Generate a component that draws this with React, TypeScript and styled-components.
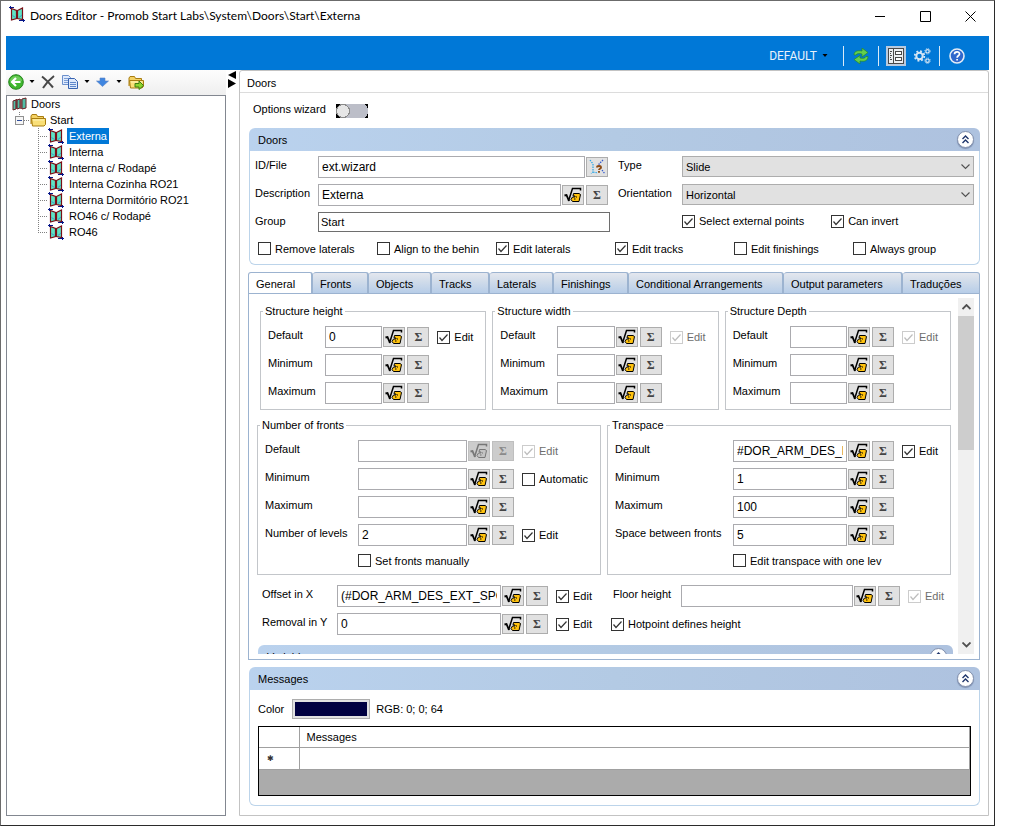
import React, { useId } from "react";
import styled, { createGlobalStyle, css } from "styled-components";

const GlobalStyle = createGlobalStyle`
  *, *::before, *::after { box-sizing: border-box; }
  body {
    margin: 0;
    background: #fff;
    color: #000;
    font: 11px/16px "Liberation Sans", Arial, sans-serif;
  }
  button, input, select { font: inherit; color: inherit; margin: 0; }
  svg { display: block; flex: none; }
`;

/* ---------- window frame ---------- */

const Window = styled.div`
  display: flex;
  flex-direction: column;
  min-height: 100vh;
  margin-right: 23px;
  padding: 0 5px 9px;
  border: 1px solid #2b2b2b;
  border-top-color: #6b6b6b;
  border-left-color: #6b6b6b;
`;

const TitleBar = styled.header`
  display: flex;
  align-items: flex-start;
  height: 35px;
  padding: 5px 9px 0 3px;
`;

const Title = styled.h1`
  flex: 1;
  margin: 0 0 0 4px;
  font: 12px/20px Lato, "Open Sans", sans-serif;
  white-space: nowrap;
`;

const WindowButtons = styled.div`
  display: flex;
  gap: 25px;
`;

const PlainButton = styled.button`
  display: flex;
  align-items: center;
  justify-content: center;
  padding: 0;
  border: 0;
  background: none;
`;

const WindowButton = styled(PlainButton)`
  width: 20px;
  height: 20px;
`;

const CommandBar = styled.div`
  display: flex;
  align-items: center;
  justify-content: flex-end;
  height: 34px;
  padding: 5px 15px 0 0;
  background: #0078d7;
  color: #fff;
`;

const ProfileButton = styled(PlainButton)`
  gap: 5px;
  margin-right: 15px;
  font: 12px/16px Roboto, "Open Sans", sans-serif;
  color: #e8f2fb;
`;

const BarDivider = styled.span`
  width: 1px;
  height: 20px;
  background: #d9eaf8;
`;

const BarGroup = styled.div`
  display: flex;
  gap: 6px;
  padding: 0 7px;
`;

const BarButton = styled(PlainButton)<{ $active?: boolean }>`
  width: 20px;
  height: 20px;
  background: ${(p) => (p.$active ? "#b9cade" : "none")};
`;

const Workspace = styled.div`
  display: flex;
  flex: 1;
`;

/* ---------- navigation ---------- */

const Sidebar = styled.nav`
  display: flex;
  flex-direction: column;
  width: 220px;
`;

const ToolStrip = styled.div`
  display: flex;
  align-items: center;
  height: 25px;
  padding-bottom: 2px;
  background: linear-gradient(#fdfdfd, #efefef);
`;

const ToolButton = styled(PlainButton)<{ $width?: number }>`
  width: ${(p) => p.$width ?? 18}px;
  height: 20px;
`;

const Tree = styled.ul`
  flex: 1;
  margin: 0;
  padding: 0;
  border: 1px solid #828790;
  list-style: none;
`;

const Branch = styled.ul`
  margin: 0;
  padding: 0;
  list-style: none;
`;

const TreeRow = styled.div<{ $indent: number }>`
  display: flex;
  align-items: center;
  height: 16px;
  padding-left: ${(p) => p.$indent}px;
`;

const TreeText = styled.span<{ $selected?: boolean }>`
  margin-left: 2px;
  padding: 0 2px;
  white-space: nowrap;
  ${(p) => p.$selected && css`background: #0078d7; color: #fff;`}
`;

const Connector = styled.span<{ $last?: boolean }>`
  width: 10px;
  height: 16px;
  background-repeat: no-repeat;
  background-image:
    repeating-linear-gradient(#808080 0 1px, transparent 1px 2px),
    repeating-linear-gradient(90deg, #808080 0 1px, transparent 1px 2px);
  background-size: 1px ${(p) => (p.$last ? "9px" : "16px")}, 10px 1px;
  background-position: 0 0, 0 8px;
`;

const Splitter = styled.div`
  width: 13px;
  padding: 1px 0 0 2px;
`;

/* ---------- editor ---------- */

const Editor = styled.main`
  display: flex;
  flex: 1;
  flex-direction: column;
  min-width: 0;
  border: 1px solid #c3c3c3;
  border-radius: 3px 3px 0 0;
`;

const EditorHeading = styled.h2`
  height: 22px;
  margin: 0;
  padding: 4px 7px 0;
  border-bottom: 1px solid #dcdcdc;
  font-size: 11px;
  font-weight: 400;
`;

const EditorBody = styled.div`
  display: flex;
  flex: 1;
  flex-direction: column;
  padding: 0 8px 9px;
`;

const WizardRow = styled.div`
  display: flex;
  align-items: center;
  gap: 10px;
  height: 35px;
  padding-left: 5px;
`;

const CaptionLabel = styled.label`
  padding-bottom: 4px;
`;

const Toggle = styled.input`
  appearance: none;
  width: 32px;
  height: 14px;
  background: radial-gradient(circle at 7px 7px, #e6e6e6 6px, #8a8a8a 6px 7px, transparent 7px),
    radial-gradient(circle at 24px 7px, #bcbec8 8px, transparent 8px),
    linear-gradient(90deg, #000 4px, #bcbec8 4px 28px, #000 28px);
`;

const Group = styled.section`
  margin-left: 1px;
`;

const GroupHeader = styled.div`
  display: flex;
  align-items: center;
  justify-content: space-between;
  height: 23px;
  padding: 0 6px 0 9px;
  border-radius: 6px 6px 0 0;
  background: linear-gradient(90deg, #bad2ee, #b3cae4 50%, #aec2df);
`;

const GroupTitle = styled.h3`
  margin: 0;
  font-size: 11px;
  font-weight: 400;
`;

const GroupBody = styled.div<{ $pad: string }>`
  padding: ${(p) => p.$pad};
  border: 1px solid #bcd4ea;
  border-top: 0;
  border-radius: 0 0 6px 6px;
`;

const RoundButton = styled(PlainButton)`
  width: 17px;
  height: 17px;
  border: 1px solid #8391ae;
  border-radius: 50%;
  background: #fff;
  box-shadow: 0 1px 1px #7e8fb0;
`;

const DoorGrid = styled.div`
  display: grid;
  grid-template-columns: 63px 1fr 72px 1fr;
  grid-auto-rows: 22px;
  row-gap: 6px;
`;

const FieldLabel = styled.label<{ $width?: number; $inset?: number }>`
  flex: none;
  align-self: flex-start;
  width: ${(p) => (p.$width ? `${p.$width}px` : "auto")};
  padding-left: ${(p) => p.$inset ?? 0}px;
  line-height: 19px;
  white-space: nowrap;
`;

const FieldRow = styled.div<{ $padEnd?: boolean }>`
  display: flex;
  align-items: center;
  height: 22px;
  padding-right: ${(p) => (p.$padEnd ? 2 : 0)}px;
`;

const TextBox = styled.input`
  flex: 1;
  width: 0;
  min-width: 0;
  height: 22px;
  padding: 0 3px;
  border: 1px solid #ababaf;
  background: #fff;
  font-size: 12px;
`;

const PlainTextBox = styled.input`
  width: 100%;
  height: 20px;
  padding: 0 2px;
  border: 1px solid #6e6e6e;
  background: #fff;
`;

const SmallButton = styled.button`
  display: flex;
  flex: none;
  align-items: center;
  justify-content: center;
  width: 22px;
  height: 20px;
  margin-left: 1px;
  padding: 0;
  border: 1px solid #adadad;
  background: #e1e1e1;
  &:disabled { background: #ccc; border-color: #bfbfbf; }
  & + & { margin-left: 2px; }
`;

const Sigma = styled.span`
  font: bold 12px/16px "Liberation Serif", serif;
  color: #444;
  button:disabled & { color: #8a8a8a; }
`;

const SelectBox = styled.div`
  display: grid;
  height: 21px;
  > * { grid-area: 1 / 1; }
  > svg { place-self: center end; margin-right: 4px; pointer-events: none; }
`;

const NativeSelect = styled.select`
  appearance: none;
  width: 100%;
  padding: 0 3px;
  border: 1px solid #adadad;
  border-radius: 0;
  background: #e1e1e1;
`;

const CheckLabel = styled.label<{ $disabled?: boolean }>`
  display: flex;
  align-items: center;
  gap: 4px;
  white-space: nowrap;
  color: ${(p) => (p.$disabled ? "#6d6d6d" : "#000")};
`;

const CheckMark = styled.span`
  display: grid;
  flex: none;
  > * { grid-area: 1 / 1; }
  > input:not(:checked) + svg { visibility: hidden; }
`;

const CheckInput = styled.input`
  appearance: none;
  width: 13px;
  height: 13px;
  border: 1px solid #333;
  background: #fff;
  &:disabled { border-color: #ccc; }
`;

const PointChecks = styled.div`
  display: flex;
  gap: 27px;
  height: 18px;
`;

const OptionRow = styled.div`
  display: grid;
  grid-template-columns: repeat(6, 1fr);
  align-items: center;
  height: 17px;
  margin-top: 6px;
  padding: 0 2px 0 3px;
`;

/* ---------- tabs ---------- */

const TabBar = styled.div`
  display: grid;
  grid-template-columns: 65fr 56fr 63fr 58fr 64fr 75fr 155fr 119fr 77fr;
  height: 22px;
  margin: 7px 0 -1px;
`;

const Tab = styled.button<{ $active?: boolean }>`
  min-width: 0;
  padding: 2px 0 0 7px;
  border: 1px solid #9cb3d0;
  border-left-width: ${(p) => (p.$active ? 1 : 0)}px;
  border-bottom-color: ${(p) => (p.$active ? "#c9dcee" : "#9cb3d0")};
  border-right-width: 2px;
  border-radius: 3px 3px 0 0;
  background: ${(p) => (p.$active ? "#fff" : "linear-gradient(#e4e7ee, #cfdbea 45%, #b7cde8)")};
  text-align: left;
  white-space: nowrap;
  &:last-child { border-right-width: 1px; }
`;

const TabPanel = styled.div`
  display: flex;
  flex: 1 1 367px;
  min-height: 0;
  margin-bottom: 7px;
  padding: 4px 5px 5px 0;
  border: 1px solid #9cb3d0;
`;

const ScrollView = styled.div`
  flex: 1;
  height: 0;
  min-height: 100%;
  padding: 7px 7px 0 8px;
  overflow: hidden;
`;

const ScrollBar = styled.div`
  display: flex;
  flex-direction: column;
  align-items: center;
  width: 16px;
  background: #f0f0f0;
`;

const ScrollArrow = styled(PlainButton)`
  width: 16px;
  height: 18px;
`;

const ScrollTrack = styled.div`
  flex: 1;
  width: 100%;
`;

const ScrollThumb = styled.div`
  height: 42%;
  background: #cdcdcd;
`;

const Columns = styled.div<{ $count: number; $inset?: number; $top?: number }>`
  display: grid;
  grid-template-columns: repeat(${(p) => p.$count}, minmax(0, 1fr));
  column-gap: 6px;
  margin-top: ${(p) => p.$top ?? 0}px;
  padding-left: ${(p) => p.$inset ?? 0}px;
`;

const Fieldset = styled.fieldset`
  min-width: 0;
  margin: 0;
  padding: 8px 0 5px 7px;
  border: 1px solid #c3c6ca;
`;

const Legend = styled.legend`
  margin-left: -5px;
  padding: 0 2px;
  line-height: 13px;
`;

const Stack = styled.div<{ $inset?: number }>`
  display: flex;
  flex-direction: column;
  gap: 6px;
  padding-left: ${(p) => p.$inset ?? 0}px;
`;

const Tail = styled.div<{ $width: number }>`
  flex: none;
  width: ${(p) => p.$width}px;
  padding-left: 8px;
`;

const IndentedCheck = styled.div<{ $inset: number }>`
  display: flex;
  height: 17px;
  padding-left: ${(p) => p.$inset}px;
`;

const VariablesGroup = styled(Group)`
  margin: 10px -2px 0 1px;
`;

/* ---------- messages ---------- */

const ColorRow = styled.div`
  display: flex;
  align-items: center;
  height: 20px;
  margin-bottom: 7px;
`;

const ColorButton = styled.button`
  width: 78px;
  height: 20px;
  margin: 0 6px 0 8px;
  padding: 2px;
  border: 1px solid #adadad;
  background: #e1e1e1;
`;

const Swatch = styled.span`
  display: block;
  height: 14px;
  background: #000040;
`;

const DataArea = styled.div`
  height: 70px;
  border: 1px solid #000;
  background: #ababab;
`;

const DataTable = styled.table`
  width: 100%;
  border-collapse: collapse;
  background: #fff;
  th, td {
    height: 22px;
    padding: 0 7px;
    border: 1px solid #a0a0a0;
    border-top: 0;
    font-weight: 400;
    text-align: left;
  }
  th { height: 20px; }
  th:first-child { width: 40px; padding: 2px 8px 0; border-left: 0; font-size: 8px; color: #333; }
`;

/* ---------- drawings ---------- */

const DoorIcon = () => (
  <svg width="17" height="16" viewBox="0 0 17 16">
    <path d="M2.500 2.500l5 2v8l-5 1.500z" fill="#5fe3c4" stroke="#7a0f16" strokeWidth="1.200" />
    <path d="M8.500 4.500l5-2.500v11.500l-5-1z" fill="#5fe3c4" stroke="#7a0f16" strokeWidth="1.200" />
    <path d="M8 4.500v8.500" stroke="#7a0f16" strokeWidth="2" />
    <path d="M3.500 9.500l3 2M10 11.500l3-2.500" stroke="#3a9ccb" />
    <path d="M0 1h1V0h1v1h3v1H2v1H1V2H0zM10 14h4v-1h1v1h1v1h-1v1h-1v-1h-4z" fill="#061688" />
  </svg>
);

const DoorsIcon = () => (
  <svg width="15" height="14" viewBox="0 0 15 14">
    <path d="M1 4l3-1v9l-3 1zM5 3l3-1v9l-3 1zM10 2l4-1v10l-4 1z" fill="#52bea6" stroke="#6d2025" />
    <path d="M4.500 2v10M9 2v10" stroke="#743035" strokeWidth="1.500" />
  </svg>
);

const FolderIcon = ({ arrow }: { arrow?: boolean }) => (
  <svg width="16" height="16" viewBox="0 0 16 16">
    <path d="M1 12V4l1-1.500h4.500l1 2h6v2" fill="#f4d264" stroke="#a87c10" />
    <path d="M2.500 14L1.500 6.500h14v6L14 14z" fill="#f9df78" stroke="#a87c10" />
    <path d="M3 8h11" stroke="#fff4b6" />
    {arrow && <path d="M7 9.500h4V7l4.500 4.500-4.500 4v-2.500H7z" fill="#8ed52d" stroke="#3d7d12" />}
  </svg>
);

const ExpanderIcon = () => (
  <svg width="15" height="16" viewBox="0 0 15 16" shapeRendering="crispEdges">
    <path d="M4.500 0v4M9 8.500h6" stroke="#808080" strokeDasharray="1 1" />
    <rect x=".5" y="4.500" width="8" height="8" fill="#f6f6f6" stroke="#919191" />
    <path d="M2 8.500h5" stroke="#2d4c9b" />
  </svg>
);

const Caret = () => (
  <svg width="6" height="4" viewBox="0 0 6 4"><path d="M.5 0h5L3 3z" fill="#000" /></svg>
);

const BackIcon = () => (
  <svg width="16" height="16" viewBox="0 0 16 16">
    <circle cx="8" cy="8" r="7.300" fill="#3eb62d" stroke="#26851e" />
    <path d="M2 7a6 5 0 0 1 12 0z" fill="#8bda74" opacity=".6" />
    <path d="M12.500 8H5M8 4L4 8l4 4" fill="none" stroke="#fff" strokeWidth="2.200" />
  </svg>
);

const DeleteIcon = () => (
  <svg width="14" height="14" viewBox="0 0 14 14">
    <path d="M1 1.500C5 4.500 9 9 12 12.500M13 1C9 4 5 8.500 2 13" fill="none" stroke="#474747" strokeWidth="2" />
  </svg>
);

const CopyIcon = () => (
  <svg width="16" height="14" viewBox="0 0 16 14">
    <path d="M.5.5h6l2 2v7h-8z" fill="#dfeafc" stroke="#6c90cc" />
    <path d="M2 3.500h4M2 5.500h4M2 7.500h4" stroke="#7d9fd6" />
    <path d="M6.500 3.500h6l3 3v7h-9z" fill="#dce8fb" stroke="#3763b0" />
    <path d="M8 7.500h6M8 9.500h6M8 11.500h6" stroke="#5f88cb" />
  </svg>
);

const DownIcon = () => (
  <svg width="13" height="10" viewBox="0 0 13 10">
    <path d="M4 1h5v3h3.500L6.500 9.500.5 4H4z" fill="#3f86e0" stroke="#5b83c4" strokeWidth=".6" />
  </svg>
);

const SplitterIcon = () => (
  <svg width="9" height="17" viewBox="0 0 9 17">
    <path d="M8 0v8L0 4zM0 8v9l8-4.500z" fill="#000" />
  </svg>
);

const RefreshIcon = () => (
  <svg width="16" height="16" viewBox="0 0 16 16">
    <path d="M1 7c0-3.500 3-5 8-4V0l6 4.500L9 9V6C6 5.300 4 5.500 3 7z" fill="#63ce4d" stroke="#258a26" strokeWidth=".7" />
    <path d="M15 8.500c0 4-3 5.500-8 4.500v3l-6-4.500L7 7.500V10c3 .7 5 .3 6-1.500z" fill="#63ce4d" stroke="#258a26" strokeWidth=".7" />
  </svg>
);

const FormIcon = () => (
  <svg width="16" height="16" viewBox="0 0 16 16" shapeRendering="crispEdges">
    <rect x=".5" y=".5" width="15" height="15" fill="#eceff2" stroke="#4a4a4a" />
    <path d="M5.500 1v14M2 3.500h2M2 5.500h1M2 7.500h2M2 9.500h1M2 11.500h2" stroke="#4a4a4a" />
    <path d="M7.500 3.500h6v3h-6zM7.500 9.500h6v3h-6z" fill="#fff" stroke="#4a4a4a" />
  </svg>
);

const GearsIcon = () => (
  <svg width="17" height="16" viewBox="0 0 17 16" fill="none" stroke="#d7e6f4">
    <circle cx="5.500" cy="8" r="3.200" strokeWidth="2" />
    <circle cx="5.500" cy="8" r="4.800" strokeWidth="1.800" strokeDasharray="1.900 1.870" />
    <circle cx="13.500" cy="3.300" r="1.700" strokeWidth="1.200" />
    <circle cx="13.500" cy="3.300" r="2.700" strokeWidth="1" strokeDasharray="1 1.120" />
    <circle cx="13.500" cy="12.700" r="1.700" strokeWidth="1.200" />
    <circle cx="13.500" cy="12.700" r="2.700" strokeWidth="1" strokeDasharray="1 1.120" />
  </svg>
);

const HelpIcon = () => (
  <svg width="16" height="16" viewBox="0 0 16 16">
    <circle cx="8" cy="8" r="7" fill="#2f67cc" stroke="#e3ebf6" strokeWidth="1.600" />
    <path d="M5.500 6.300C5.500 3 10.600 3.200 10.500 6c0 1.800-2.400 1.800-2.400 3.700M8.100 11v1.500" fill="none" stroke="#fff" strokeWidth="1.700" />
  </svg>
);

const RootIcon = ({ disabled }: { disabled?: boolean }) => {
  const ink = disabled ? "#777" : "#000";
  return (
    <svg width="18" height="16" viewBox="0 0 18 16">
      <path
        d="M9.500 6.500h5.500l1.500 1-1.500 7H8.500l-1.500-2 1.500-2.500h2.500v-1H9z"
        fill={disabled ? "#c4c4c4" : "#ffc20e"}
        stroke={ink}
      />
      <path d="M10 12h1.500M12.500 9.500v1" fill="none" stroke={ink} />
      <path d="M4.500 14L8.500 1.500h8v2" fill="none" stroke={ink} strokeWidth="1.500" />
      <path d="M.5 8.500l2-.5 2.500 6" fill="none" stroke={ink} strokeWidth="1.900" />
    </svg>
  );
};

const PickIcon = () => (
  <svg width="18" height="16" viewBox="0 0 18 16">
    <path d="M2 1l3 4v8l-2 1.500M5 13l5 1" fill="none" stroke="#24a5e8" strokeDasharray="1.500 1" strokeWidth="1.200" />
    <path d="M15 1l-4 4 1 2M14 11l3 4" fill="none" stroke="#3158cf" strokeDasharray="1.500 1" strokeWidth="1.200" />
    <path d="M9 8.500c0-2 4-2 4 0 0 1.500-2 1-2 2.500M11 12v1.800" fill="none" stroke="#8b4a13" strokeWidth="1.900" />
  </svg>
);

const Chevron = ({ flip, bold }: { flip?: boolean; bold?: boolean }) => (
  <svg width="9" height="6" viewBox="0 0 9 6">
    <path d={flip ? "M.5 5l4-4 4 4" : "M.5.5l4 4 4-4"} fill="none" stroke="#505050" strokeWidth={bold ? 1.8 : 1.1} />
  </svg>
);

const DoubleUp = () => (
  <svg width="9" height="9" viewBox="0 0 9 9">
    <path d="M1.500 4l3-3 3 3M1.500 8l3-3 3 3" fill="none" stroke="#1f356b" strokeWidth="1.400" />
  </svg>
);

/* ---------- building blocks ---------- */

type CheckProps = { label: string; checked?: boolean; disabled?: boolean };

const Check = ({ label, checked, disabled }: CheckProps) => (
  <CheckLabel $disabled={disabled}>
    <CheckMark>
      <CheckInput type="checkbox" defaultChecked={checked} disabled={disabled} />
      <svg width="13" height="13" viewBox="0 0 13 13" pointerEvents="none">
        <path d="M2.500 6.500l2.500 3 5.500-6" fill="none" stroke={disabled ? "#bdbdbd" : "#333"} strokeWidth="1.200" />
      </svg>
    </CheckMark>
    {label}
  </CheckLabel>
);

const FormulaButtons = ({ disabled }: { disabled?: boolean }) => (
  <>
    <SmallButton type="button" aria-label="Formula" disabled={disabled}><RootIcon disabled={disabled} /></SmallButton>
    <SmallButton type="button" aria-label="Sum" disabled={disabled}><Sigma>Σ</Sigma></SmallButton>
  </>
);

type ValueRowProps = {
  label: string;
  labelWidth: number;
  labelInset?: number;
  tail: number;
  value?: string;
  locked?: boolean;
  check?: CheckProps;
};

const ValueRow = ({ label, labelWidth, labelInset, tail, value, locked, check }: ValueRowProps) => {
  const id = useId();
  return (
    <FieldRow>
      <FieldLabel htmlFor={id} $width={labelWidth} $inset={labelInset}>{label}</FieldLabel>
      <TextBox id={id} defaultValue={value ?? ""} />
      <FormulaButtons disabled={locked} />
      <Tail $width={tail}>{check && <Check {...check} />}</Tail>
    </FieldRow>
  );
};

const StructureBox = ({ title, value, editable }: { title: string; value?: string; editable?: boolean }) => (
  <Fieldset>
    <Legend>{title}</Legend>
    <Stack>
      <ValueRow label="Default" labelWidth={57} tail={56} value={value} check={{ label: "Edit", checked: true, disabled: !editable }} />
      <ValueRow label="Minimum" labelWidth={57} tail={56} />
      <ValueRow label="Maximum" labelWidth={57} tail={56} />
    </Stack>
  </Fieldset>
);

const Header = ({ title }: { title: string }) => (
  <GroupHeader>
    <GroupTitle>{title}</GroupTitle>
    <RoundButton type="button" aria-label="Collapse"><DoubleUp /></RoundButton>
  </GroupHeader>
);

const Dropdown = ({ id, value }: { id: string; value: string }) => (
  <SelectBox>
    <NativeSelect id={id} defaultValue={value}><option>{value}</option></NativeSelect>
    <Chevron />
  </SelectBox>
);

const doors = [
  "Externa", "Interna", "Interna c/ Rodapé", "Interna Cozinha RO21",
  "Interna Dormitório RO21", "RO46 c/ Rodapé", "RO46",
];

const tabs = [
  "General", "Fronts", "Objects", "Tracks", "Laterals", "Finishings",
  "Conditional Arrangements", "Output parameters", "Traduções",
];

export default function App() {
  return (
    <>
      <GlobalStyle />
      <Window>
        <TitleBar>
          <DoorIcon />
          <Title>Doors Editor - Promob Start Labs\System\Doors\Start\Externa</Title>
          <WindowButtons>
            <WindowButton aria-label="Minimize"><svg width="11" height="11"><path d="M0 5.500h10" stroke="#000" /></svg></WindowButton>
            <WindowButton aria-label="Maximize"><svg width="11" height="11"><path d="M.5.500h10v10h-10z" fill="none" stroke="#000" /></svg></WindowButton>
            <WindowButton aria-label="Close"><svg width="11" height="11"><path d="M.5.500l10 10M10.500.500l-10 10" stroke="#000" /></svg></WindowButton>
          </WindowButtons>
        </TitleBar>

        <CommandBar>
          <ProfileButton>DEFAULT <Caret /></ProfileButton>
          <BarDivider />
          <BarGroup><BarButton aria-label="Refresh"><RefreshIcon /></BarButton></BarGroup>
          <BarDivider />
          <BarGroup>
            <BarButton aria-label="Form view" $active><FormIcon /></BarButton>
            <BarButton aria-label="Settings"><GearsIcon /></BarButton>
          </BarGroup>
          <BarDivider />
          <BarGroup><BarButton aria-label="Help"><HelpIcon /></BarButton></BarGroup>
        </CommandBar>

        <Workspace>
          <Sidebar>
            <ToolStrip>
              <ToolButton aria-label="Back" $width={19}><BackIcon /></ToolButton>
              <ToolButton aria-label="Back history" $width={14}><Caret /></ToolButton>
              <ToolButton aria-label="Delete"><DeleteIcon /></ToolButton>
              <ToolButton aria-label="Copy" $width={26}><CopyIcon /></ToolButton>
              <ToolButton aria-label="Copy options" $width={8}><Caret /></ToolButton>
              <ToolButton aria-label="Move down" $width={22}><DownIcon /></ToolButton>
              <ToolButton aria-label="Move options" $width={12}><Caret /></ToolButton>
              <ToolButton aria-label="Export" $width={22}><FolderIcon arrow /></ToolButton>
            </ToolStrip>
            <Tree>
              <li>
                <TreeRow $indent={5}><DoorsIcon /><TreeText>Doors</TreeText></TreeRow>
                <Branch>
                  <li>
                    <TreeRow $indent={8}><ExpanderIcon /><FolderIcon /><TreeText>Start</TreeText></TreeRow>
                    <Branch>
                      {doors.map((name, i) => (
                        <li key={name}>
                          <TreeRow $indent={31}>
                            <Connector $last={i === doors.length - 1} />
                            <DoorIcon />
                            <TreeText $selected={i === 0}>{name}</TreeText>
                          </TreeRow>
                        </li>
                      ))}
                    </Branch>
                  </li>
                </Branch>
              </li>
            </Tree>
          </Sidebar>

          <Splitter><SplitterIcon /></Splitter>

          <Editor>
            <EditorHeading>Doors</EditorHeading>
            <EditorBody>
              <WizardRow>
                <CaptionLabel htmlFor="wizard">Options wizard</CaptionLabel>
                <Toggle id="wizard" type="checkbox" />
              </WizardRow>

              <Group>
                <Header title="Doors" />
                <GroupBody $pad="5px 5px 7px">
                  <DoorGrid>
                    <FieldLabel htmlFor="file">ID/File</FieldLabel>
                    <FieldRow $padEnd>
                      <TextBox id="file" defaultValue="ext.wizard" />
                      <SmallButton type="button" aria-label="Pick"><PickIcon /></SmallButton>
                    </FieldRow>
                    <FieldLabel htmlFor="type" $inset={8}>Type</FieldLabel>
                    <Dropdown id="type" value="Slide" />

                    <FieldLabel htmlFor="description">Description</FieldLabel>
                    <FieldRow $padEnd>
                      <TextBox id="description" defaultValue="Externa" />
                      <FormulaButtons />
                    </FieldRow>
                    <FieldLabel htmlFor="orientation" $inset={8}>Orientation</FieldLabel>
                    <Dropdown id="orientation" value="Horizontal" />

                    <FieldLabel htmlFor="group">Group</FieldLabel>
                    <PlainTextBox id="group" defaultValue="Start" />
                    <span />
                    <PointChecks>
                      <Check label="Select external points" checked />
                      <Check label="Can invert" checked />
                    </PointChecks>
                  </DoorGrid>
                  <OptionRow>
                    <Check label="Remove laterals" />
                    <Check label="Align to the behin" />
                    <Check label="Edit laterals" checked />
                    <Check label="Edit tracks" checked />
                    <Check label="Edit finishings" />
                    <Check label="Always group" />
                  </OptionRow>
                </GroupBody>
              </Group>

              <TabBar role="tablist">
                {tabs.map((name, i) => (
                  <Tab key={name} type="button" role="tab" aria-selected={i === 0} $active={i === 0}>{name}</Tab>
                ))}
              </TabBar>
              <TabPanel role="tabpanel">
                <ScrollView>
                  <Columns $count={3} $inset={3}>
                    <StructureBox title="Structure height" value="0" editable />
                    <StructureBox title="Structure width" />
                    <StructureBox title="Structure Depth" />
                  </Columns>

                  <Columns $count={2} $top={9}>
                    <Fieldset>
                      <Legend>Number of fronts</Legend>
                      <Stack>
                        <ValueRow label="Default" labelWidth={93} tail={86} locked check={{ label: "Edit", checked: true, disabled: true }} />
                        <ValueRow label="Minimum" labelWidth={93} tail={86} check={{ label: "Automatic" }} />
                        <ValueRow label="Maximum" labelWidth={93} tail={86} />
                        <ValueRow label="Number of levels" labelWidth={93} tail={86} value="2" check={{ label: "Edit", checked: true }} />
                        <IndentedCheck $inset={93}><Check label="Set fronts manually" /></IndentedCheck>
                      </Stack>
                    </Fieldset>
                    <Fieldset>
                      <Legend>Transpace</Legend>
                      <Stack>
                        <ValueRow label="Default" labelWidth={118} tail={56} value="#DOR_ARM_DES_EXT" check={{ label: "Edit", checked: true }} />
                        <ValueRow label="Minimum" labelWidth={118} tail={56} value="1" />
                        <ValueRow label="Maximum" labelWidth={118} tail={56} value="100" />
                        <ValueRow label="Space between fronts" labelWidth={118} tail={56} value="5" />
                        <IndentedCheck $inset={118}><Check label="Edit transpace with one lev" /></IndentedCheck>
                      </Stack>
                    </Fieldset>
                  </Columns>

                  <Columns $count={2} $top={10}>
                    <Stack $inset={5}>
                      <ValueRow label="Offset in X" labelWidth={75} tail={53} value="(#DOR_ARM_DES_EXT_SPC" check={{ label: "Edit", checked: true }} />
                      <ValueRow label="Removal in Y" labelWidth={75} tail={53} value="0" check={{ label: "Edit", checked: true }} />
                    </Stack>
                    <Stack $inset={4}>
                      <ValueRow label="Floor height" labelWidth={70} labelInset={2} tail={51} check={{ label: "Edit", checked: true, disabled: true }} />
                      <FieldRow><Check label="Hotpoint defines height" checked /></FieldRow>
                    </Stack>
                  </Columns>

                  <VariablesGroup><Header title="Variables" /></VariablesGroup>
                </ScrollView>
                <ScrollBar>
                  <ScrollArrow aria-label="Scroll up"><Chevron flip bold /></ScrollArrow>
                  <ScrollTrack><ScrollThumb /></ScrollTrack>
                  <ScrollArrow aria-label="Scroll down"><Chevron bold /></ScrollArrow>
                </ScrollBar>
              </TabPanel>

              <Group>
                <Header title="Messages" />
                <GroupBody $pad="9px 8px 9px">
                  <ColorRow>
                    <label htmlFor="color">Color</label>
                    <ColorButton id="color" type="button"><Swatch /></ColorButton>
                    <span>RGB: 0; 0; 64</span>
                  </ColorRow>
                  <DataArea>
                    <DataTable>
                      <thead><tr><th /><th>Messages</th></tr></thead>
                      <tbody><tr><th scope="row">✱</th><td /></tr></tbody>
                    </DataTable>
                  </DataArea>
                </GroupBody>
              </Group>
            </EditorBody>
          </Editor>
        </Workspace>
      </Window>
    </>
  );
}
